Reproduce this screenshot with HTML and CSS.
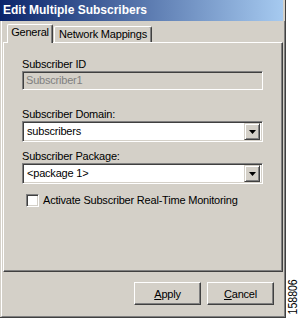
FILE: index.html
```html
<!DOCTYPE html>
<html lang="en">
<head>
  <meta charset="UTF-8">
  <title>Edit Multiple Subscribers</title>
  <link rel="stylesheet" href="styles.css">
</head>
<body>
  <div class="screen">
    <div class="window">
      <div class="titlebar">Edit Multiple Subscribers</div>
      <div class="client">
        <div class="tabs">
          <div class="tab tab-active">General</div>
          <div class="tab tab-network">Network Mappings</div>
        </div>
        <div class="panel">
          <div class="field-label">Subscriber ID</div>
          <div class="textbox disabled">Subscriber1</div>

          <div class="field-label domain">Subscriber Domain:</div>
          <div class="combo">
            <span class="combo-value">subscribers</span>
            <span class="combo-button">
              <svg width="7" height="4" viewBox="0 0 7 4"><polygon points="0,0 7,0 3.5,4" fill="#000"/></svg>
            </span>
          </div>

          <div class="field-label package">Subscriber Package:</div>
          <div class="combo">
            <span class="combo-value">&lt;package 1&gt;</span>
            <span class="combo-button">
              <svg width="7" height="4" viewBox="0 0 7 4"><polygon points="0,0 7,0 3.5,4" fill="#000"/></svg>
            </span>
          </div>

          <label class="check">
            <span class="check-box"></span>
            Activate Subscriber Real-Time Monitoring
          </label>
        </div>
        <div class="buttons">
          <button class="btn"><u>A</u>pply</button>
          <button class="btn"><u>C</u>ancel</button>
        </div>
      </div>
    </div>
    <div class="side">
      <span class="figure-id">158806</span>
    </div>
  </div>
</body>
</html>
```

FILE: styles.css
```css
body {
  margin: 0;
  background: #fff;
  color: #000;
  font-family: "Liberation Sans", Arial, sans-serif;
  font-size: 11px;
  letter-spacing: -0.2px;
}

.screen {
  display: flex;
  width: 299px;
  height: 318px;
}

/* Window frame */
.window {
  width: 286px;
  height: 318px;
  box-sizing: border-box;
  display: flex;
  flex-direction: column;
  background: #d4d0c8;
  border-right: 1px solid #404040;
  border-bottom: 1px solid #404040;
}

.titlebar {
  height: 21px;
  margin-right: 2px;
  padding-left: 3px;
  background: linear-gradient(to right, #0a246a, #a6caf0);
  color: #fff;
  font-weight: bold;
  font-size: 12px;
  line-height: 21px;
  letter-spacing: 0;
}

.client {
  flex: 1;
  display: flex;
  flex-direction: column;
  margin-left: 1px;
  padding: 0 1px;
  border-left: 1px solid #fff;
  border-right: 1px solid #808080;
  border-bottom: 1px solid #808080;
}

/* Tabs */
.tabs {
  display: flex;
  align-items: flex-end;
  height: 22px;
  padding-left: 4px;
  margin-bottom: -1px;
  position: relative;
  z-index: 1;
}

.tab {
  height: 16px;
  box-sizing: border-box;
  margin-bottom: 1px;
  border-top: 1px solid #fff;
  border-left: 1px solid #fff;
  border-right: 1px solid #404040;
  border-radius: 2px 2px 0 0;
  box-shadow: inset -1px 0 #808080;
  background: #d4d0c8;
  line-height: 14px;
  text-align: center;
}

.tab-active {
  width: 46px;
  height: 19px;
  margin-bottom: 0;
}

.tab-network {
  width: 98px;
  margin-left: 1px;
}

/* Tab page */
.panel {
  height: 230px;
  box-sizing: border-box;
  display: flex;
  flex-direction: column;
  align-items: flex-start;
  padding: 15px 0 0 18px;
  border: 1px solid;
  border-color: #fff #404040 #404040 #fff;
  box-shadow: inset -1px -1px #808080;
}

.field-label {
  line-height: 13px;
}

.field-label.domain {
  margin-top: 18px;
}

.field-label.package {
  margin-top: 8px;
}

.textbox,
.combo {
  width: 241px;
  box-sizing: border-box;
  border: 1px solid;
  border-color: #808080 #fff #fff #808080;
  box-shadow: inset 1px 1px #404040, inset -1px -1px #d4d0c8;
}

.textbox {
  height: 19px;
  padding-left: 3px;
  line-height: 17px;
}

.textbox.disabled {
  background: #d4d0c8;
  color: #808080;
}

.combo {
  height: 21px;
  display: flex;
  align-items: center;
  padding: 2px;
  background: #fff;
}

.combo-value {
  flex: 1;
  padding-left: 2px;
  line-height: 17px;
}

.combo-button {
  width: 16px;
  height: 17px;
  box-sizing: border-box;
  display: flex;
  align-items: center;
  justify-content: center;
  border: 1px solid;
  border-color: #d4d0c8 #404040 #404040 #d4d0c8;
  box-shadow: inset 1px 1px #fff, inset -1px -1px #808080;
  background: #d4d0c8;
}

.combo-button svg {
  display: block;
}

/* Checkbox row */
.check {
  display: flex;
  align-items: center;
  gap: 4px;
  margin: 10px 0 0 4px;
  line-height: 13px;
}

.check-box {
  width: 13px;
  height: 13px;
  box-sizing: border-box;
  border: 1px solid;
  border-color: #808080 #fff #fff #808080;
  box-shadow: inset 1px 1px #404040, inset -1px -1px #d4d0c8;
  background: #fff;
}

/* Dialog buttons */
.buttons {
  display: flex;
  justify-content: flex-end;
  gap: 6px;
  padding: 10px 9px 0 0;
}

.btn {
  width: 67px;
  height: 23px;
  box-sizing: border-box;
  padding: 0;
  border: 1px solid;
  border-color: #fff #404040 #404040 #fff;
  box-shadow: inset -1px -1px #808080;
  background: #d4d0c8;
  color: #000;
  font: inherit;
  letter-spacing: inherit;
}

/* Figure number beside the window */
.side {
  flex: 1;
  display: flex;
  align-items: flex-end;
  justify-content: center;
}

.figure-id {
  writing-mode: vertical-rl;
  transform: rotate(180deg) scaleY(0.84);
  font-family: "Liberation Sans", Arial, sans-serif;
  font-size: 12.5px;
  line-height: 12px;
  letter-spacing: 0;
}
```
